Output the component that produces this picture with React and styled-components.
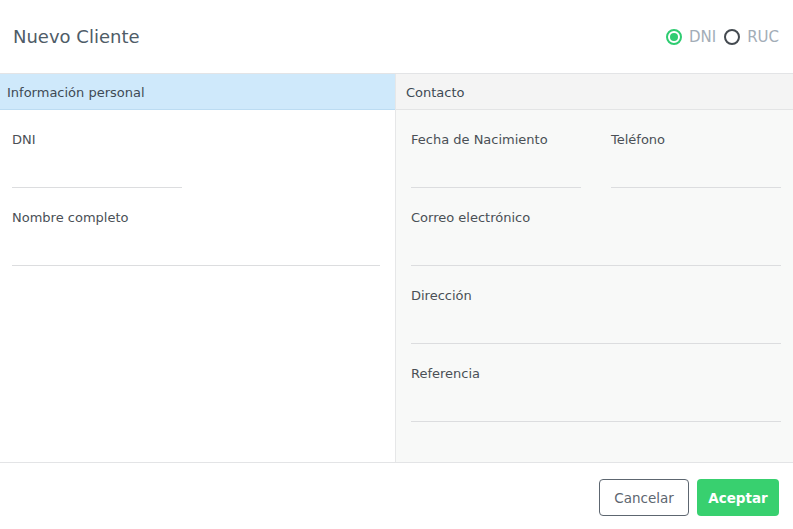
import React, { useState } from "react";
import styled, { createGlobalStyle } from "styled-components";

const GlobalStyle = createGlobalStyle`
  html, body {
    margin: 0;
    padding: 0;
    background: #ffffff;
  }
  * {
    box-sizing: border-box;
  }
`;

const App = () => {
  const [docType, setDocType] = useState("DNI");

  return (
    <>
      <GlobalStyle />
      <Modal>
        <Header>
          <Title>Nuevo Cliente</Title>
          <RadioGroup>
            {["DNI", "RUC"].map((type) => (
              <RadioLabel key={type} onClick={() => setDocType(type)}>
                <RadioCircle checked={docType === type} />
                <RadioText>{type}</RadioText>
              </RadioLabel>
            ))}
          </RadioGroup>
        </Header>
        <Body>
          <Panel>
            <PanelHeader active>Información personal</PanelHeader>
            <Fields left>
              <Field>
                <Label>DNI</Label>
                <Input />
              </Field>
              <Field />
              <Field wide>
                <Label>Nombre completo</Label>
                <Input />
              </Field>
            </Fields>
          </Panel>
          <Panel muted>
            <PanelHeader>Contacto</PanelHeader>
            <Fields>
              <Field>
                <Label>Fecha de Nacimiento</Label>
                <Input />
              </Field>
              <Field>
                <Label>Teléfono</Label>
                <Input />
              </Field>
              <Field wide>
                <Label>Correo electrónico</Label>
                <Input />
              </Field>
              <Field wide>
                <Label>Dirección</Label>
                <Input />
              </Field>
              <Field wide>
                <Label>Referencia</Label>
                <Input />
              </Field>
            </Fields>
          </Panel>
        </Body>
        <Footer>
          <CancelButton>Cancelar</CancelButton>
          <AcceptButton>Aceptar</AcceptButton>
        </Footer>
      </Modal>
    </>
  );
};

const font = `"DejaVu Sans", "Noto Sans", sans-serif`;

const Modal = styled.div`
  width: 793px;
  height: 529px;
  display: flex;
  flex-direction: column;
  background: #ffffff;
  font-family: ${font};
`;

const Header = styled.div`
  height: 74px;
  flex-shrink: 0;
  display: flex;
  align-items: center;
  justify-content: space-between;
  padding: 0 14px 0 13px;
  border-bottom: 1px solid #e3e4e6;
`;

const Title = styled.h1`
  margin: 0;
  font-size: 18px;
  font-weight: 400;
  color: #4f5c67;
`;

const RadioGroup = styled.div`
  display: flex;
  align-items: center;
  gap: 8px;
`;

const RadioLabel = styled.label`
  display: flex;
  align-items: center;
  gap: 7px;
  cursor: pointer;
`;

const RadioCircle = styled.span`
  width: 16px;
  height: 16px;
  border-radius: 50%;
  border: 2px solid ${(p) => (p.checked ? "#2ecc71" : "#444a50")};
  display: flex;
  align-items: center;
  justify-content: center;
  &::after {
    content: "";
    width: 8px;
    height: 8px;
    border-radius: 50%;
    background: ${(p) => (p.checked ? "#2ecc71" : "transparent")};
  }
`;

const RadioText = styled.span`
  font-size: 15px;
  color: #a3adb7;
`;

const Body = styled.div`
  flex: 1;
  display: grid;
  grid-template-columns: 395px 1fr;
`;

const Panel = styled.div`
  display: flex;
  flex-direction: column;
  background: ${(p) => (p.muted ? "#f8f9f8" : "#ffffff")};
  border-left: ${(p) => (p.muted ? "1px solid #e6e7e8" : "none")};
`;

const PanelHeader = styled.div`
  height: 36px;
  display: flex;
  align-items: center;
  padding: 1px ${(p) => (p.active ? "7px" : "10px")} 0;
  font-size: 13px;
  color: #3e4a55;
  background: ${(p) => (p.active ? "#cfe9fb" : "#f4f4f4")};
  border-bottom: 1px solid ${(p) => (p.active ? "#bcdcf2" : "#e3e4e5")};
`;

const Fields = styled.div`
  display: grid;
  grid-template-columns: 1fr 1fr;
  column-gap: 30px;
  row-gap: 20px;
  padding: 20px ${(p) => (p.left ? "15px 0 12px" : "13px 0 15px")};
`;

const Field = styled.div`
  display: flex;
  flex-direction: column;
  grid-column: ${(p) => (p.wide ? "1 / -1" : "auto")};
`;

const Label = styled.label`
  padding-top: 1px;
  font-size: 13px;
  line-height: 18px;
  color: #4a5056;
`;

const Input = styled.input`
  height: 39px;
  border: none;
  border-bottom: 1px solid #dcdddf;
  background: transparent;
  outline: none;
  font-family: ${font};
  font-size: 13px;
  padding: 0;
`;

const Footer = styled.div`
  height: 67px;
  flex-shrink: 0;
  display: flex;
  justify-content: flex-end;
  align-items: flex-start;
  gap: 8px;
  padding: 16px 14px 0 0;
  border-top: 1px solid #e3e4e6;
`;

const CancelButton = styled.button`
  width: 90px;
  height: 37px;
  border: 1px solid #5d6670;
  border-radius: 4px;
  background: #ffffff;
  color: #5d6670;
  font-family: ${font};
  font-size: 13.5px;
  cursor: pointer;
`;

const AcceptButton = styled.button`
  width: 82px;
  height: 37px;
  border: none;
  border-radius: 4px;
  background: #38d06f;
  color: #ffffff;
  font-family: ${font};
  font-size: 13.5px;
  font-weight: 700;
  cursor: pointer;
`;

export default App;
